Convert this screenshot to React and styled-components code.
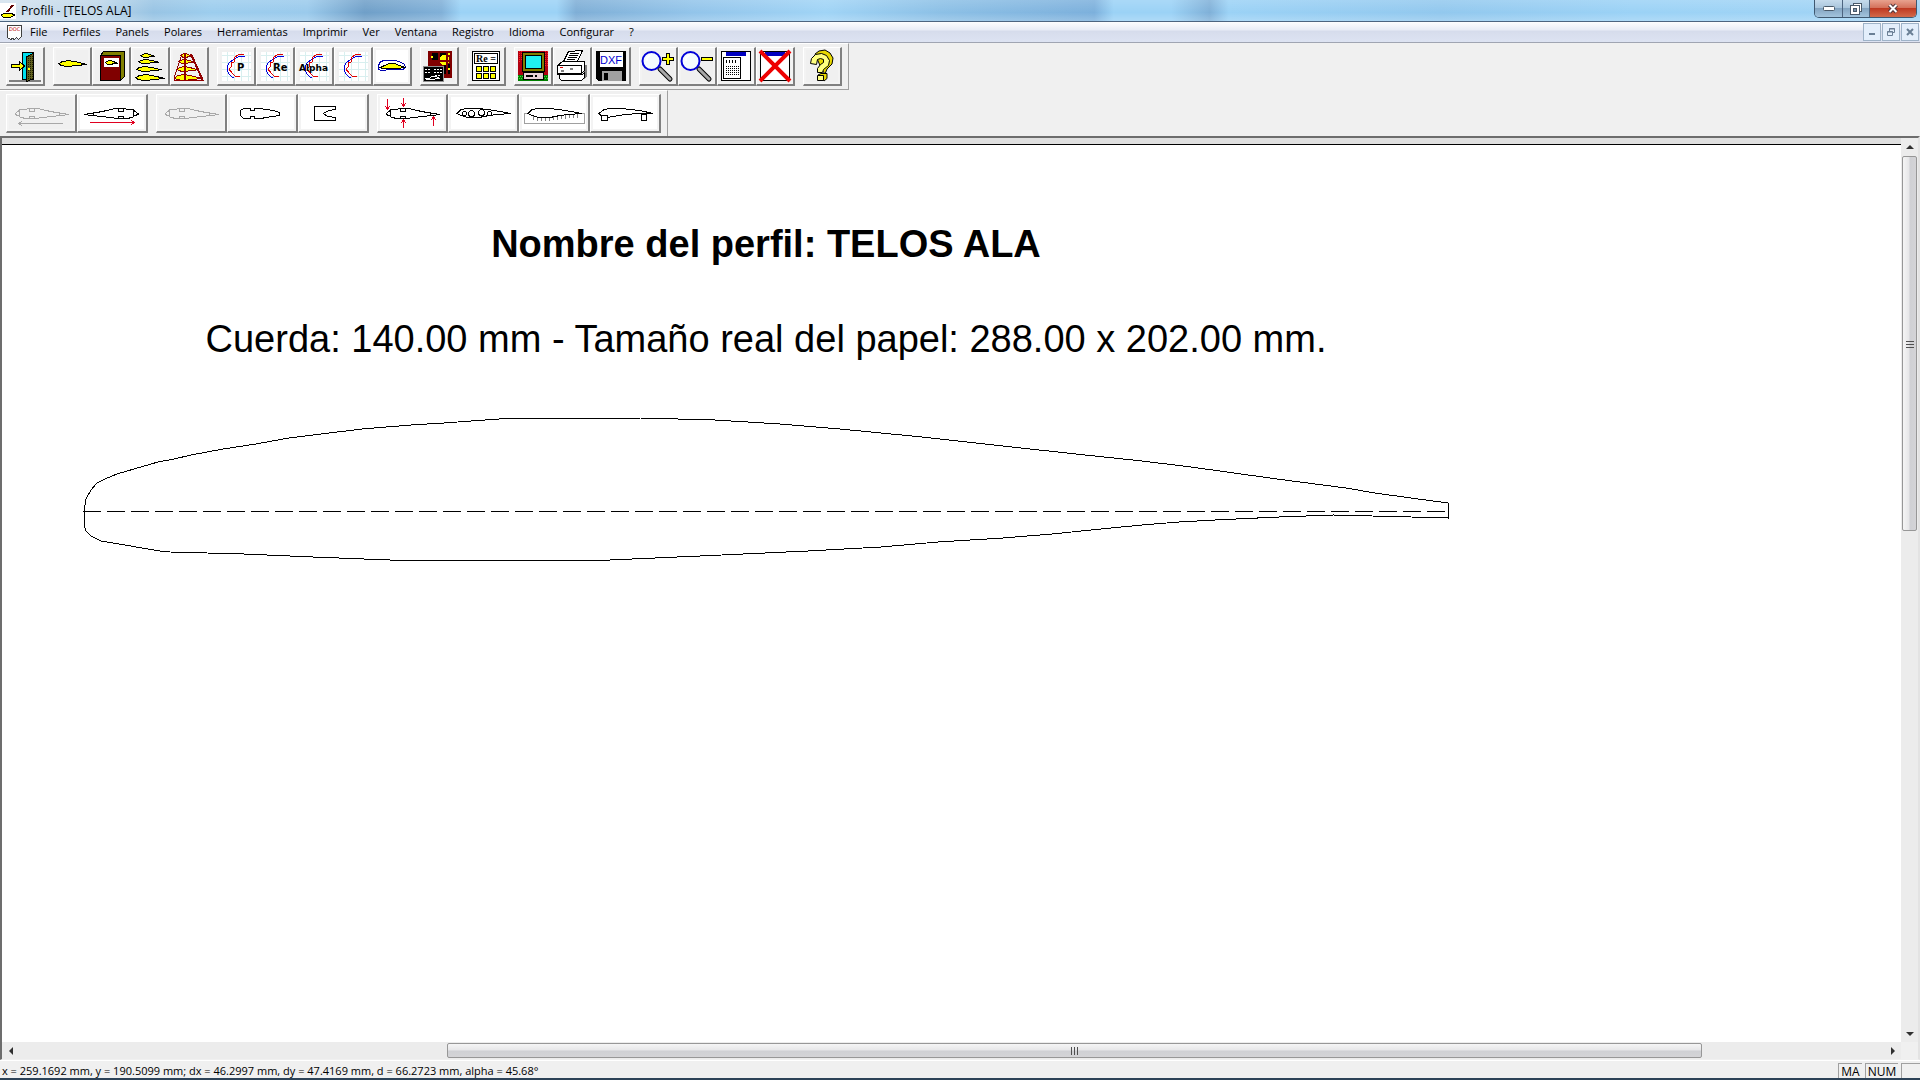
import React from 'react'
import styled, { createGlobalStyle } from 'styled-components';

const GlobalStyle = createGlobalStyle`
  * {
    box-sizing: border-box;
  }
  body {
    margin: 0;
    background: #f0f0f0;
    font-family: 'Open Sans', 'Noto Sans', sans-serif;
    font-size: 11px;
    line-height: 16px;
    color: #000;
  }
  button {
    font: inherit;
    color: inherit;
    padding: 0;
    margin: 0;
  }
`;

const Window = styled.div`
  display: flex;
  flex-direction: column;
  height: 100vh;
`;

const TitleBar = styled.header`
  display: flex;
  align-items: flex-start;
  justify-content: space-between;
  height: 22px;
  flex: none;
  border-bottom: 1px solid #4d6580;
  background:
    linear-gradient(to bottom, rgba(255, 255, 255, 0.15), rgba(255, 255, 255, 0) 60%, rgba(255, 255, 255, 0.2)),
    linear-gradient(to right, #d3e2ee 0, #c0d8ea 5%, #98c4e4 8%, #9ccdee 11%, #9acaec 16%, #6f9fc8 19%,
      #80b0d8 23%, #9bd2f6 24%, #9bd2f6 29%, #7eaed6 30%, #92c4ea 36%, #a0d4f6 43%, #8cc0e6 49%,
      #7cb0dc 57%, #9bd2f6 58%, #9bd2f6 61%, #7fb0d8 63%, #9bd2f6 64%, #92c8ee 75%, #9bd2f6 85%, #a2d4f5 100%);
`;

const TitleText = styled.div`
  display: flex;
  align-items: center;
  gap: 5px;
  height: 21px;
  h1 {
    margin: 0;
    font-size: 12px;
    font-weight: 400;
  }
`;

const Caption = styled.div`
  display: flex;
  margin-right: 3px;
  border: 1px solid #3f5870;
  border-top: 0;
  border-radius: 0 0 5px 5px;
  overflow: hidden;
`;

const CaptionButton = styled.button`
  display: flex;
  align-items: center;
  justify-content: center;
  width: ${({ wide }) => (wide ? '47px' : '27px')};
  height: 17px;
  border: 0;
  border-left: ${({ first }) => (first ? '0' : '1px solid #4d6580')};
  background: ${({ wide }) => (wide
    ? 'linear-gradient(to bottom, #e8a28f, #d4725c 45%, #bf3a22 50%, #d2694a)'
    : 'linear-gradient(to bottom, #c5dbec, #aac6dd 45%, #84a5c2 50%, #a3c4dd)')};
`;

const MenuBar = styled.nav`
  display: flex;
  align-items: center;
  gap: 1px;
  height: 21px;
  flex: none;
  padding: 0 1px 0 6px;
  background: linear-gradient(to bottom, #fdfdfe, #e8ecf6 40%, #d6dcec 45%, #dde3f2);
  border-bottom: 1px solid #a0a5b2;
`;

const MenuItem = styled.button`
  padding: 0 7px;
  border: 0;
  background: none;
`;

const ChildButtons = styled.div`
  display: flex;
  gap: 1px;
  margin-left: auto;
`;

const ChildButton = styled.button`
  display: flex;
  align-items: center;
  justify-content: center;
  width: 18px;
  height: 18px;
  border: 1px solid #9fb3c8;
  background: #e3eefb;
`;

const Toolbar = styled.div`
  display: flex;
  align-self: flex-start;
  gap: 8px;
  flex: none;
  padding: 3px 6px 3px 6px;
  border-top: 1px solid #fff;
  border-right: 1px solid #a0a0a0;
  border-bottom: ${({ last }) => (last ? '0' : '1px solid #a0a0a0')};
`;

const Group = styled.div`
  display: flex;
`;

const ToolButton = styled.button`
  width: ${({ wide }) => (wide ? '71px' : '39px')};
  height: 39px;
  border: solid;
  border-width: 1px 2px 2px 1px;
  border-color: #fff #808080 #808080 #fff;
  background: ${({ paper }) => (paper ? '#fff' : '#f0f0f0')};
  box-shadow: inset 0 0 0 2px #f3f3f3;
  svg {
    display: block;
  }
`;

const Workspace = styled.main`
  display: grid;
  grid-template-columns: minmax(0, 1fr) 17px;
  grid-template-rows: minmax(0, 1fr) 17px;
  flex: 1;
  min-height: 0;
  border: solid #6d6d6d;
  border-width: 2px 2px 1px 2px;
  border-right-color: #e3e3e3;
  border-bottom-color: #f0f0f0;
`;

const Sheet = styled.section`
  border-top: 6px solid #dfdfdf;
  background: #fff;
  overflow: hidden;
`;

const SheetBody = styled.div`
  border-top: 1px solid #000;
  padding-top: 77px;
`;

const Headings = styled.div`
  width: 1528px;
  text-align: center;
  font-family: 'Liberation Sans', Arial, sans-serif;
  font-size: 38px;
  line-height: 44px;
  h2 {
    margin: 0;
    font-size: 38px;
    font-weight: 700;
  }
  p {
    margin: 51px 0 0;
  }
`;

const Drawing = styled.svg`
  display: block;
  margin: 51px 0 0 78px;
`;

const ScrollBar = styled.div`
  display: flex;
  flex-direction: ${({ vertical }) => (vertical ? 'column' : 'row')};
  background: #ececec;
`;

const ScrollArrow = styled.button`
  display: flex;
  align-items: center;
  justify-content: center;
  width: 17px;
  height: 17px;
  flex: none;
  border: 0;
  background: none;
`;

const ScrollTrack = styled.div`
  display: flex;
  flex: 1;
  flex-direction: ${({ vertical }) => (vertical ? 'column' : 'row')};
`;

const ScrollGap = styled.div`
  flex: ${({ share }) => share} 0 0;
`;

const ScrollThumb = styled.div`
  display: flex;
  align-items: center;
  justify-content: center;
  flex: ${({ share }) => share} 0 0;
  margin: ${({ vertical }) => (vertical ? '1px' : '1px 0')};
  border: 1px solid #979797;
  border-radius: 2px;
  background: linear-gradient(${({ vertical }) => (vertical ? 'to right' : 'to bottom')}, #f5f5f5, #e6e6e8 48%, #cfd0d4 52%, #d4d4d7);
`;

const StatusBar = styled.footer`
  display: flex;
  justify-content: space-between;
  height: 20px;
  flex: none;
  padding: 2px 0 0 2px;
  border-top: 1px solid #fff;
  border-bottom: 2px solid #2c4257;
  background: #f0f0f0;
`;

const Keys = styled.div`
  display: flex;
  gap: 3px;
  font-size: 12px;
`;

const Key = styled.span`
  width: ${({ size }) => size};
  height: 15px;
  line-height: 15px;
  text-align: center;
  border: solid #a0a0a0;
  border-width: 1px 0 0 1px;
`;

const Icon = ({ wide, children }) => (
  <svg width={wide ? 68 : 36} height="36" viewBox={wide ? '1 1 68 36' : '1 1 36 36'} fill="none" stroke="#000" shapeRendering="crispEdges">
    {children}
  </svg>
)

const YellowFoil = ({ x, y, w, h }) => (
  <path
    fill="#ffff00"
    d={`M${x} ${y + h * 0.55} L${x + w * 0.12} ${y + h * 0.2} L${x + w * 0.35} ${y} L${x + w * 0.6} ${y + h * 0.2} L${x + w} ${y + h * 0.65} L${x + w * 0.65} ${y + h * 0.85} L${x + w * 0.3} ${y + h} L${x + w * 0.1} ${y + h * 0.85} Z`}
  />
)

const Curves = ({ label, x, size }) => (
  <Icon>
    <rect x="5" y="5" width="29" height="29" fill="#fff" stroke="none" />
    <path stroke="#d8efef" d="M10.500 5v29M17.500 5v29M24.500 5v29M31.500 5v29M5 8.500h29M5 15.500h29M5 22.500h29M5 29.500h29" />
    <path stroke="#0000e0" d="M28 9h-5l-6 3-5 4-2 4v3l2 4 3 3h2" />
    <path stroke="#e00000" d="M27 7h-4l-5 3-1 5-3 1 1 3-3 3 3 4 3 3h5" />
    {label && (
      <text x={x} y="24" fill="#000" stroke="none" fontFamily="DejaVu Sans, sans-serif" fontWeight="700" fontSize={size}>{label}</text>
    )}
  </Icon>
)

const Lens = ({ children }) => (
  <Icon>
    <path stroke="#000" strokeWidth="5" strokeLinecap="round" shapeRendering="auto" d="M21 22l10 10" />
    <path stroke="#a8a8a8" strokeWidth="3" strokeLinecap="round" shapeRendering="auto" d="M21 22l10 10" />
    <circle cx="12.500" cy="14" r="9" fill="#f4fbff" stroke="#0000d8" strokeWidth="2" shapeRendering="auto" />
    <path stroke="#fff" strokeWidth="2" d="M8 14v-3l3-3" />
    {children}
  </Icon>
)

const SmallWindow = ({ children }) => (
  <Icon>
    <rect x="4.500" y="4.500" width="29" height="29" fill="#fff" />
    <rect x="9" y="5" width="20" height="4" fill="#0000c0" stroke="none" />
    {children}
  </Icon>
)

const FoilOutline = () => (
  <>
    <path d="M9 19.500l3-2 2-2h5l4-1h9l8 2 10 2 13 2-8 1-10 1-8 1-8 1h-9l-5-1-3-2-3-1z" />
    <path d="M13.500 16v6M23.500 15v2h5v-2M23.500 24v-2h5v2M53.500 18v3" />
  </>
)

const SolidFoil = () => (
  <path d="M9 19.500l4-4 6-1h11l10 1 12 2 11 2-13 1-9 1-10 2h-11l-7-2z" />
)

const IconExit = () => (
  <Icon>
    <path stroke="#808080" strokeWidth="2" d="M3 34h32" />
    <rect x="16.500" y="5.500" width="11" height="27" fill="#00e0f0" />
    <path fill="#606020" d="M20.500 9.500l7-3v25l-7 3z" />
    <path stroke="#202000" strokeDasharray="1 1" d="M22.500 9v24M24.500 9v24M26.500 9v24" />
    <path fill="#ffff00" d="M5.500 17.500h8v-3l5 4.500-5 4.500v-3h-8z" />
    <path stroke="#ffff00" strokeWidth="2" d="M22 22h2" />
  </Icon>
)

const IconBook = () => (
  <Icon>
    <path fill="#808000" d="M8.500 8.500l3-4h21v25l-4 4z" />
    <rect x="8.500" y="8.500" width="20" height="25" fill="#800000" />
    <rect x="12" y="11" width="15" height="9" fill="#fff" stroke="none" />
    <YellowFoil x={13.5} y={13.500} w={12} h={4} />
  </Icon>
)

const IconStack = () => (
  <Icon>
    <YellowFoil x={10} y={6.5} w={13} h={4} />
    <YellowFoil x={7.5} y={12.5} w={20} h={4} />
    <YellowFoil x={5.5} y={19.500} w={25} h={5} />
    <YellowFoil x={4.5} y={27.500} w={29} h={6} />
  </Icon>
)

const IconPanel = () => (
  <Icon>
    <g stroke="#900000">
      <path d="M12 7L4 31v2h29" />
      <YellowFoil x={11} y={6.5} w={11} h={4} />
      <YellowFoil x={9} y={12.5} w={16} h={4} />
      <YellowFoil x={7} y={19.500} w={21} h={5} />
      <YellowFoil x={4.5} y={27.500} w={27} h={6} />
      <path strokeWidth="2" d="M15 6v28M21 7l12 27" />
    </g>
  </Icon>
)

const IconFlow = () => (
  <Icon>
    <path stroke="#0000b0" fill="#fff" d="M5.500 19.500l1-4 4-2h10l6 1 5 3 1 3-2 1.500H18l-5 1-4 1-3-1.500z" />
    <path fill="#ffff00" d="M7.500 20.500l4-2 5-2h5l5 2 6 2-8 1H9.500z" />
  </Icon>
)

const IconConsole = () => (
  <Icon>
    <rect x="8" y="4" width="24" height="27" fill="#800000" stroke="none" />
    <path fill="#000" stroke="none" d="M12 6h14v8H12zM24 17h6v10h-6z" />
    <circle cx="24.500" cy="13" r="5" fill="#ffff00" stroke="none" />
    <path stroke="#800000" strokeWidth="2" d="M8 14h24M19 4v14M27 4v24" />
    <path stroke="#ffff00" strokeWidth="2" d="M11 10h2M28 22h2M28 7h2" />
    <rect x="3.500" y="19.500" width="20" height="15" fill="#000" stroke="#909090" />
    <path stroke="#fff" strokeDasharray="2 1" d="M5 22.500h6M14 22.500h8M5 25.500h5M14 25.500h8M15 28.500h6" />
    <path stroke="#fff" d="M5 31.500h4l3-2h4l4 2h-4l-2 1H8z" />
  </Icon>
)

const IconCalculator = () => (
  <Icon>
    <rect x="5.500" y="4.500" width="27" height="29" fill="#fff" />
    <rect x="7.500" y="6.500" width="23" height="10" fill="#fff" />
    <text x="9" y="15" fill="#000" stroke="none" fontFamily="Liberation Serif, serif" fontWeight="700" fontSize="10">Re =</text>
    {[19.5, 26.5].map((y) => [9.5, 16.5, 23.5].map((x) => (
      <rect key={`${x}-${y}`} x={x} y={y} width="5" height="5" fill="#ffff00" />
    )))}
  </Icon>
)

const IconComputer = () => (
  <Icon>
    <rect x="4" y="4" width="30" height="30" fill="#b00010" stroke="none" />
    <path stroke="#ff2020" strokeDasharray="1 1" d="M5.500 4v12M7.500 4v9M31.500 4v16M33.500 4v16" />
    <path fill="#008000" stroke="none" d="M4 28h30v6H4z" />
    <path stroke="#40d040" strokeDasharray="1 1" d="M4 29.500h30M5 31.500h29" />
    <rect x="8.500" y="5.500" width="22" height="19" fill="#808000" />
    <rect x="11.500" y="8.500" width="16" height="13" fill="#20f0f0" />
    <rect x="9.500" y="25.500" width="20" height="7" fill="#e8d0d8" />
    <path strokeWidth="2" d="M12 29h7M21 29h2" />
  </Icon>
)

const IconPrinter = () => (
  <Icon>
    <path fill="#808080" stroke="none" d="M12 15l22 3v11l-3 3V20z" />
    <path fill="#fff" d="M10.500 14.500l5-10 14-1-5 11z" />
    <path d="M17 6.500h9M16 8.500h9M15 10.500h9M14 12.500h8" />
    <path fill="#fff" d="M4.500 18.500l5-4h22v9l-4 4h-23z" />
    <path fill="#fff" stroke="none" d="M5 19h23v8H5z" />
    <path d="M4.500 18.500h24v8h-24z" />
    <path fill="#fff" d="M6.500 27.500h23l2-2v5l-3 3h-20l-2-2z" />
    <path stroke="#e00000" d="M7 20.500h3" />
    <path stroke="#808080" strokeWidth="2" d="M8 24h3M17 22h3" />
  </Icon>
)

const IconDxf = () => (
  <Icon>
    <path fill="#000" d="M4.500 4.500h29v29h-27l-2-2z" />
    <rect x="8" y="5" width="23" height="15" fill="#fff" stroke="none" />
    <text x="8" y="17" fill="#0000d0" stroke="none" fontFamily="Liberation Sans, sans-serif" fontSize="11">DXF</text>
    <rect x="10" y="24" width="20" height="10" fill="#a0a0a0" stroke="none" />
    <rect x="12" y="26" width="4" height="7" fill="#000" stroke="none" />
  </Icon>
)

const IconWindow = () => (
  <SmallWindow>
    <rect x="6.500" y="10.500" width="17" height="21" fill="#fff" />
    <path strokeWidth="3" strokeDasharray="1 2" d="M9 14h12" />
    <path strokeDasharray="1 1" d="M9 19.500h13M9 21.500h13M9 23.500h13M9 25.500h13M9 27.500h13" />
  </SmallWindow>
)

const IconCancel = () => (
  <SmallWindow>
    <path stroke="#ee0000" strokeWidth="4" shapeRendering="auto" d="M4 4l30 30M34 4L4 34" />
  </SmallWindow>
)

const IconHelp = () => (
  <Icon>
    <g fill="#e8d800" shapeRendering="auto">
      <path d="M12 7l4-3 6-1 5 3 3 5-1 6-5 5-2 5-3-4z" />
      <path fill="#ffff80" d="M7.500 16.500l1-5 4-4 6-1 5 2 3 5-1 5-5 4-1 3h-5v-4l3-4 3-2v-3l-3-1-3 1-1 5z" />
      <path d="M15 28l3-1.500h6v5L21 34z" />
      <path fill="#ffff80" d="M14.500 28.500h6v5h-6z" />
    </g>
  </Icon>
)

const IconLeft = () => (
  <Icon wide>
    <g stroke="#a8a8a8">
      <FoilOutline />
      <path d="M57 29.500H13M16 27l-3 2.500 3 2.500" />
    </g>
  </Icon>
)

const IconRight = () => (
  <Icon wide>
    <g transform="translate(70 0) scale(-1 1)">
      <FoilOutline />
    </g>
    <path stroke="#e00020" d="M13 28.500h44M54 26l3 2.500-3 2.500" />
  </Icon>
)

const IconGhost = () => (
  <Icon wide>
    <g stroke="#a8a8a8"><FoilOutline /></g>
  </Icon>
)

const IconCut = () => (
  <Icon wide>
    <path d="M13.500 16.500l3-2h7v2h4v-2h5l7 1 7 1 6 2v3l-7 1-6 1-6 1h-6v-2h-4v2h-7l-3-3z" />
  </Icon>
)

const IconNose = () => (
  <Icon wide>
    <path d="M16.500 12.500h21v3l-7 1-5 3 4 3 8 1v3h-21z" />
  </Icon>
)

const IconPins = () => (
  <Icon wide>
    <FoilOutline />
    <path stroke="#e00020" d="M10.500 5v10M8 12l2.500 3 2.500-3M26.500 4v8M24 9l2.500 3 2.500-3M26.500 34v-8M24 29l2.500-3 2.500 3M56.500 32v-9M54 26l2.500-3 2.500 3" />
  </Icon>
)

const IconHoles = () => (
  <Icon wide>
    <SolidFoil />
    <circle cx="16.500" cy="19.500" r="2" />
    <circle cx="23.500" cy="19.500" r="3" />
    <circle cx="33.500" cy="18.500" r="3" />
    <circle cx="41.500" cy="19.500" r="2" />
  </Icon>
)

const IconJig = () => (
  <Icon wide>
    <path stroke="#a0a0a0" d="M10 19.500H5.500v10h60v-10h-4" />
    <path stroke="#808080" d="M14.500 22v4M18.500 23v4M22.500 23v4M26.500 23v4M30.500 23v4M34.500 22v4M38.500 22v4M42.500 21v4M46.500 21v4M50.500 20v4M54.500 20v4M58.500 20v4" />
    <SolidFoil />
  </Icon>
)

const IconFeet = () => (
  <Icon wide>
    <path d="M17 23.500l6-1 12-2 14-1h14l-13-3-10-1-9-1H20l-6 1-5 4 3 3" />
    <path fill="#fff" d="M11.500 21.500h6v5h-6zM51.500 20.500h5v6h-5z" />
  </Icon>
)

const mainTools = [
  [{ name: 'Salir', icon: <IconExit /> }],
  [
    { name: 'Perfil', icon: <Icon><YellowFoil x={5.5} y={13.500} w={28} h={6} /></Icon> },
    { name: 'Biblioteca', icon: <IconBook /> },
    { name: 'Costillas', icon: <IconStack /> },
    { name: 'Panel', icon: <IconPanel /> },
  ],
  [
    { name: 'Polar', icon: <Curves label="P" x="20" size="10" /> },
    { name: 'Polar por Re', icon: <Curves label="Re" x="17" size="10" /> },
    { name: 'Polar por alpha', icon: <Curves label="Alpha" x="4" size="9" /> },
    { name: 'Curva', icon: <Curves /> },
    { name: 'Flujo', icon: <IconFlow />, paper: true },
  ],
  [{ name: 'Xfoil', icon: <IconConsole /> }],
  [{ name: 'Calcular Re', icon: <IconCalculator /> }],
  [
    { name: 'Pantalla', icon: <IconComputer /> },
    { name: 'Imprimir', icon: <IconPrinter /> },
    { name: 'Guardar DXF', icon: <IconDxf /> },
  ],
  [
    { name: 'Acercar', icon: <Lens><path fill="#ffff00" d="M27.500 6.500h3v4h4v3h-4v4h-3v-4h-4v-3h4z" /></Lens> },
    { name: 'Alejar', icon: <Lens><path fill="#ffff00" d="M23.500 10.500h11v3h-11z" /></Lens> },
    { name: 'Ventana', icon: <IconWindow /> },
    { name: 'Cerrar todo', icon: <IconCancel /> },
  ],
  [{ name: 'Ayuda', icon: <IconHelp /> }],
];

const ribTools = [
  [
    { name: 'Hacia la izquierda', icon: <IconLeft /> },
    { name: 'Hacia la derecha', icon: <IconRight />, paper: true },
  ],
  [
    { name: 'Perfil completo', icon: <IconGhost /> },
    { name: 'Perfil recortado', icon: <IconCut />, paper: true },
    { name: 'Borde de ataque', icon: <IconNose />, paper: true },
  ],
  [
    { name: 'Larguerillos', icon: <IconPins />, paper: true },
    { name: 'Aligeramientos', icon: <IconHoles />, paper: true },
    { name: 'Cuna', icon: <IconJig />, paper: true },
    { name: 'Apoyos', icon: <IconFeet />, paper: true },
  ],
];

const menus = ['File', 'Perfiles', 'Panels', 'Polares', 'Herramientas', 'Imprimir', 'Ver', 'Ventana', 'Registro', 'Idioma', 'Configurar', '?'];

const upper = '84,511 86,499 91,490 97,483 105,479 117,474 134,469 158,462 174,459 191,455 223,449 256,444 289,438 321,434 362,429 411,425 444,423 485,420 513,418 640,418 715,420 780,424 840,429 922,437 1003,446 1085,455 1142,461 1191,467 1277,479 1346,488 1375,493 1411,498 1448,503';
const lower = '1448,518 1411,517 1333,515 1279,517 1215,520 1179,522 1142,525 1101,529 1052,534 1003,538 938,542 881,547 808,551 700,556 610,560 390,560 313,557 244,554 170,552 160,551 101,541 91,536 86,531 84,525';

const Tools = ({ groups, wide, label }) => (
  <Toolbar role="toolbar" aria-label={label} last={wide}>
    {groups.map((group) => (
      <Group key={group[0].name}>
        {group.map(({ name, icon, paper }) => (
          <ToolButton key={name} type="button" aria-label={name} wide={wide} paper={paper}>{icon}</ToolButton>
        ))}
      </Group>
    ))}
  </Toolbar>
)

const Arrow = ({ d, name }) => (
  <ScrollArrow type="button" aria-label={name}>
    <svg width="8" height="8" viewBox="0 0 8 8"><path d={d} fill="#303030" /></svg>
  </ScrollArrow>
)

const App = () => (
  <>
    <GlobalStyle />
    <Window>
      <TitleBar>
        <TitleText>
          <svg width="16" height="16" viewBox="0 0 16 16" shapeRendering="crispEdges">
            <rect width="16" height="16" fill="#fff" />
            <path d="M1 12l4-2h5l5 2-4 2H3z" fill="#ffff00" stroke="#000" />
            <path d="M7 9l6-7" stroke="#600000" strokeWidth="2" />
          </svg>
          <h1>Profili - [TELOS ALA]</h1>
        </TitleText>
        <Caption>
          <CaptionButton type="button" aria-label="Minimizar" first>
            <svg width="12" height="5" viewBox="0 0 12 5"><rect x="0.500" y="0.500" width="11" height="4" rx="1" fill="#fff" stroke="#4a5a6a" /></svg>
          </CaptionButton>
          <CaptionButton type="button" aria-label="Restaurar">
            <svg width="12" height="12" viewBox="0 0 12 12" stroke="#4a5a6a" fill="#fff">
              <rect x="3.500" y="0.500" width="8" height="8" />
              <rect x="0.500" y="2.500" width="9" height="9" />
              <rect x="3.500" y="5.500" width="3" height="3" fill="#7a93ab" />
            </svg>
          </CaptionButton>
          <CaptionButton type="button" aria-label="Cerrar" wide>
            <svg width="12" height="11" viewBox="0 0 12 11">
              <path d="M2.500 2l7 7M9.500 2l-7 7" stroke="#50343a" strokeWidth="4" />
              <path d="M2.500 2l7 7M9.500 2l-7 7" stroke="#fff" strokeWidth="2" />
            </svg>
          </CaptionButton>
        </Caption>
      </TitleBar>

      <MenuBar>
        <svg width="16" height="17" viewBox="0 0 16 17" shapeRendering="crispEdges">
          <path d="M1.500 1.500h14v11l-3 3-2-2-2 2-2-1-2 1-3-2z" fill="#fff" stroke="#404040" />
          <text x="3" y="7" fontSize="5" fontFamily="DejaVu Sans, sans-serif" fill="#c00000">DOC</text>
        </svg>
        {menus.map((menu) => (
          <MenuItem key={menu} type="button">{menu}</MenuItem>
        ))}
        <ChildButtons>
          <ChildButton type="button" aria-label="Minimizar documento">
            <svg width="8" height="8" viewBox="0 0 8 8"><path d="M1 6h6" stroke="#6a7f95" strokeWidth="2" /></svg>
          </ChildButton>
          <ChildButton type="button" aria-label="Restaurar documento">
            <svg width="8" height="8" viewBox="0 0 8 8" fill="none" stroke="#6a7f95"><path d="M2.500 3V.5h5v4H6M2 1h6M.5 3.500h5v4h-5zM0 4h6" /></svg>
          </ChildButton>
          <ChildButton type="button" aria-label="Cerrar documento">
            <svg width="8" height="8" viewBox="0 0 8 8"><path d="M1 1l6 6M7 1L1 7" stroke="#6a7f95" strokeWidth="2" /></svg>
          </ChildButton>
        </ChildButtons>
      </MenuBar>

      <Tools groups={mainTools} label="Principal" />
      <Tools groups={ribTools} label="Costilla" wide />

      <Workspace>
        <Sheet>
          <SheetBody>
            <Headings>
              <h2>Nombre del perfil: TELOS ALA</h2>
              <p>Cuerda: 140.00 mm - Tamaño real del papel: 288.00 x 202.00 mm.</p>
            </Headings>
            <Drawing width="1376" height="154" viewBox="80 412 1376 154" fill="none" stroke="#000" shapeRendering="crispEdges">
              <polygon points={`${upper} ${lower}`} />
              <path d="M83 511.500H1448" strokeDasharray="18 6" />
            </Drawing>
          </SheetBody>
        </Sheet>
        <ScrollBar vertical>
          <Arrow name="Arriba" d="M0 6l4-4 4 4z" />
          <ScrollTrack vertical>
            <ScrollThumb vertical share={375} role="scrollbar" aria-label="Vertical" aria-orientation="vertical" aria-controls="root" aria-valuenow={0}>
              <svg width="8" height="8" viewBox="0 0 8 8" stroke="#505050"><path d="M0 1.500h8M0 4.500h8M0 7.500h8" /></svg>
            </ScrollThumb>
            <ScrollGap share={495} />
          </ScrollTrack>
          <Arrow name="Abajo" d="M0 2h8l-4 4z" />
        </ScrollBar>
        <ScrollBar>
          <Arrow name="Izquierda" d="M6 0v8L2 4z" />
          <ScrollTrack>
            <ScrollGap share={428} />
            <ScrollThumb share={1255} role="scrollbar" aria-label="Horizontal" aria-orientation="horizontal" aria-controls="root" aria-valuenow={70}>
              <svg width="8" height="8" viewBox="0 0 8 8" stroke="#505050"><path d="M1.500 0v8M4.500 0v8M7.500 0v8" /></svg>
            </ScrollThumb>
            <ScrollGap share={182} />
          </ScrollTrack>
          <Arrow name="Derecha" d="M2 0v8l4-4z" />
        </ScrollBar>
      </Workspace>

      <StatusBar>
        <span>x = 259.1692 mm, y = 190.5099 mm; dx = 46.2997 mm, dy = 47.4169 mm, d = 66.2723 mm, alpha = 45.68°</span>
        <Keys>
          <Key size="24px">MA</Key>
          <Key size="33px">NUM</Key>
          <Key size="19px" />
        </Keys>
      </StatusBar>
    </Window>
  </>
)

export default App
